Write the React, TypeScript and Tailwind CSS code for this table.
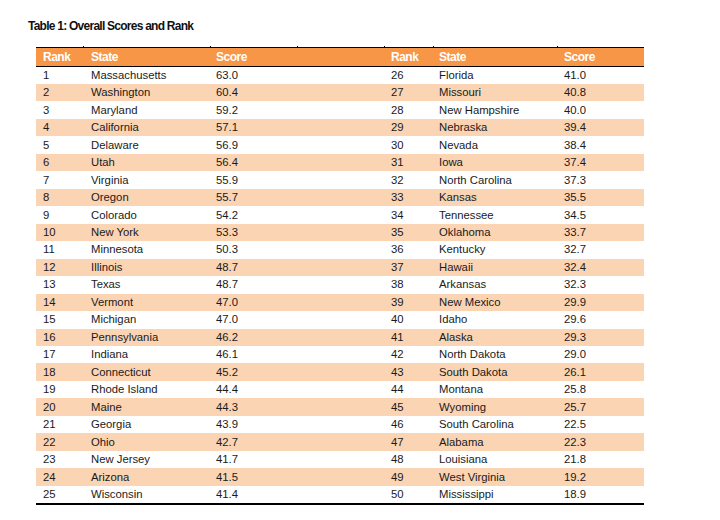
const left: [number, string, string][] = [
  [1, "Massachusetts", "63.0"],
  [2, "Washington", "60.4"],
  [3, "Maryland", "59.2"],
  [4, "California", "57.1"],
  [5, "Delaware", "56.9"],
  [6, "Utah", "56.4"],
  [7, "Virginia", "55.9"],
  [8, "Oregon", "55.7"],
  [9, "Colorado", "54.2"],
  [10, "New York", "53.3"],
  [11, "Minnesota", "50.3"],
  [12, "Illinois", "48.7"],
  [13, "Texas", "48.7"],
  [14, "Vermont", "47.0"],
  [15, "Michigan", "47.0"],
  [16, "Pennsylvania", "46.2"],
  [17, "Indiana", "46.1"],
  [18, "Connecticut", "45.2"],
  [19, "Rhode Island", "44.4"],
  [20, "Maine", "44.3"],
  [21, "Georgia", "43.9"],
  [22, "Ohio", "42.7"],
  [23, "New Jersey", "41.7"],
  [24, "Arizona", "41.5"],
  [25, "Wisconsin", "41.4"],
];

const right: [number, string, string][] = [
  [26, "Florida", "41.0"],
  [27, "Missouri", "40.8"],
  [28, "New Hampshire", "40.0"],
  [29, "Nebraska", "39.4"],
  [30, "Nevada", "38.4"],
  [31, "Iowa", "37.4"],
  [32, "North Carolina", "37.3"],
  [33, "Kansas", "35.5"],
  [34, "Tennessee", "34.5"],
  [35, "Oklahoma", "33.7"],
  [36, "Kentucky", "32.7"],
  [37, "Hawaii", "32.4"],
  [38, "Arkansas", "32.3"],
  [39, "New Mexico", "29.9"],
  [40, "Idaho", "29.6"],
  [41, "Alaska", "29.3"],
  [42, "North Dakota", "29.0"],
  [43, "South Dakota", "26.1"],
  [44, "Montana", "25.8"],
  [45, "Wyoming", "25.7"],
  [46, "South Carolina", "22.5"],
  [47, "Alabama", "22.3"],
  [48, "Louisiana", "21.8"],
  [49, "West Virginia", "19.2"],
  [50, "Mississippi", "18.9"],
];

// column widths of the 7-column table (4th one is the empty spacer)
const cols = "grid grid-cols-[47px_127px_87px_87px_49px_124px_87px]";

export default function App() {
  return (
    <div className="w-[720px] h-[520px] bg-white text-black font-['Liberation_Sans',Arial,sans-serif]">
      <div className="pl-[28px] pt-[19px] h-[47px]">
        <h1 className="text-[12px] font-bold tracking-[-0.75px] leading-[14px] text-[#111]">
          Table 1: Overall Scores and Rank
        </h1>
      </div>

      <div className="ml-[36px] w-[608px]">
        {/* header */}
        <div className="relative border-t border-black">
          <div className={`${cols} h-[17.5px] bg-[#f79646] text-white text-[12px] font-bold tracking-[-0.5px] items-center border-b-[1.5px] border-black box-content`}>
            <div className="pl-[7px]">Rank</div>
            <div className="pl-[8px]">State</div>
            <div className="pl-[6px]">Score</div>
            <div />
            <div className="pl-[7px]">Rank</div>
            <div className="pl-[6px]">State</div>
            <div className="pl-[7px]">Score</div>
          </div>
          {[47, 174, 261, 348, 397, 521].map((x) => (
            <div
              key={x}
              className="absolute top-[-2px] w-px h-[2px] bg-black"
              style={{ left: x }}
            />
          ))}
        </div>

        {/* body */}
        <div className="border-b-2 border-black text-[11.3px] text-[#1a1a1a]">
          {left.map((l, i) => {
            const r = right[i];
            return (
              <div
                key={l[0]}
                className={`${cols} h-[17.48px] items-center ${i % 2 === 1 ? "bg-[#fbd4b4]" : "bg-white"}`}
              >
                <div className="pl-[7px]">{l[0]}</div>
                <div className="pl-[8px]">{l[1]}</div>
                <div className="pl-[6px]">{l[2]}</div>
                <div />
                <div className="pl-[7px]">{r[0]}</div>
                <div className="pl-[6px]">{r[1]}</div>
                <div className="pl-[7px]">{r[2]}</div>
              </div>
            );
          })}
        </div>
      </div>
    </div>
  );
}
